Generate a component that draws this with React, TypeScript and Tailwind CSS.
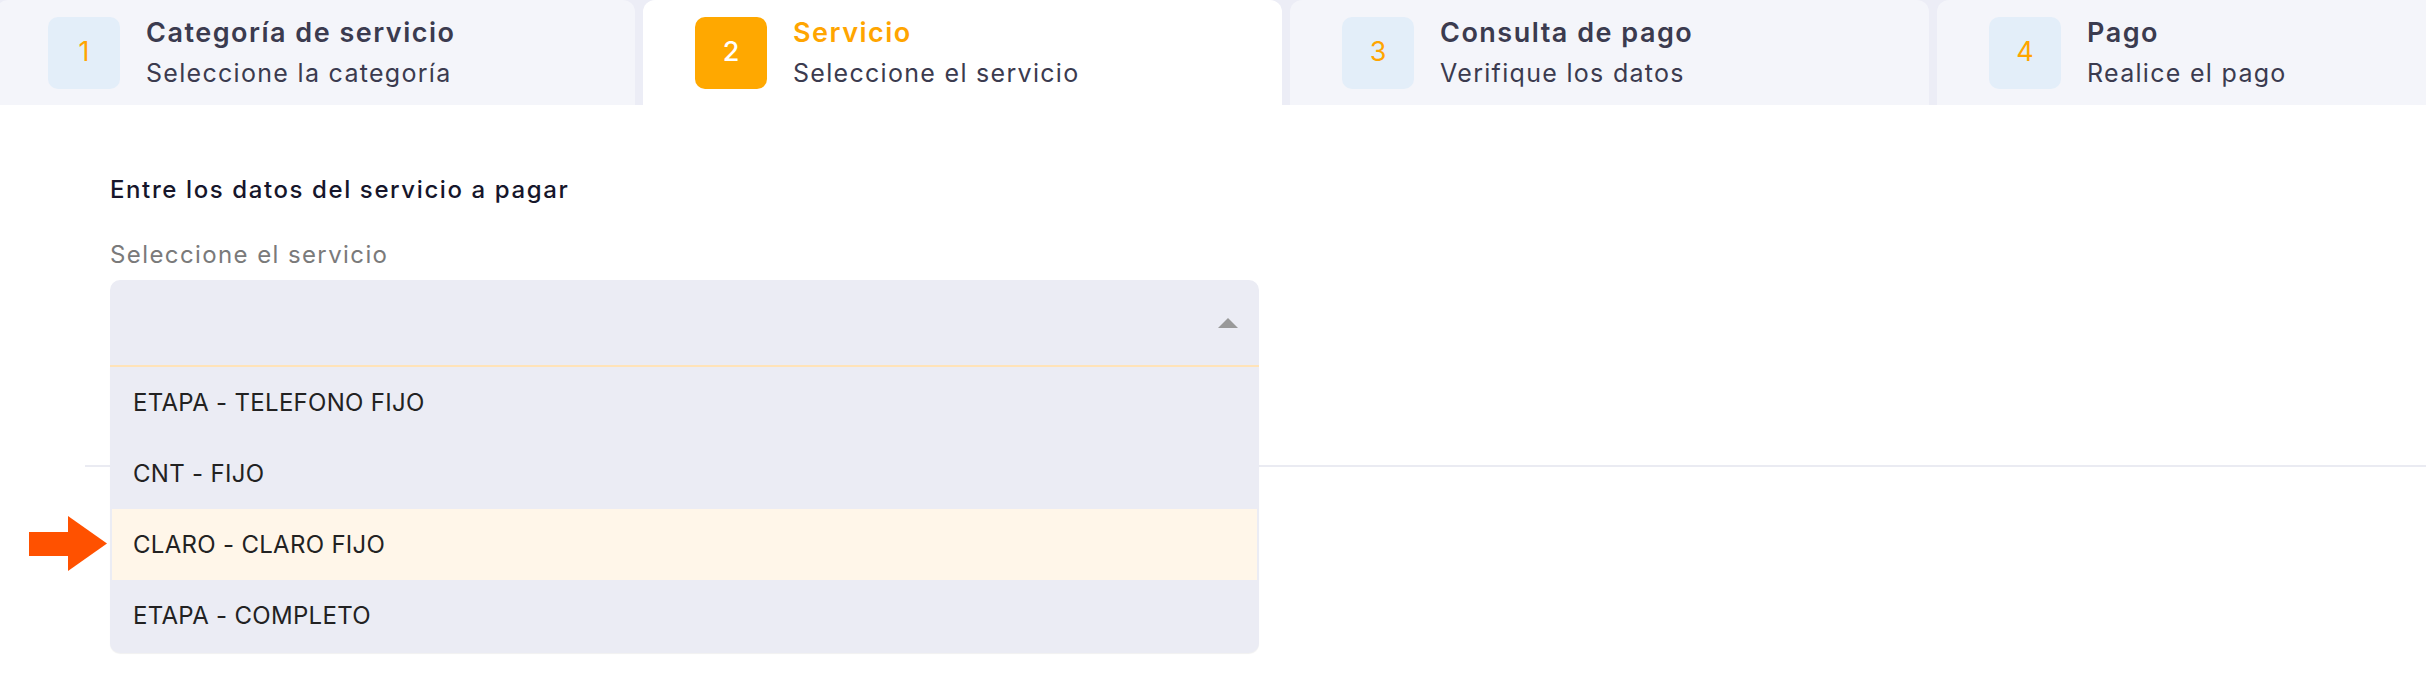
import React from 'react';

interface Step {
  n: number;
  title: string;
  subtitle: string;
  active?: boolean;
}

const steps: Step[] = [
  { n: 1, title: 'Categoría de servicio', subtitle: 'Seleccione la categoría' },
  { n: 2, title: 'Servicio', subtitle: 'Seleccione el servicio', active: true },
  { n: 3, title: 'Consulta de pago', subtitle: 'Verifique los datos' },
  { n: 4, title: 'Pago', subtitle: 'Realice el pago' },
];

const options = ['ETAPA - TELEFONO FIJO', 'CNT - FIJO', 'CLARO - CLARO FIJO', 'ETAPA - COMPLETO'];

const App = () => {
  return (
    <div className="relative w-[2426px] h-[696px] overflow-hidden bg-white font-['Inter',sans-serif]">
      {/* pasos */}
      <div className="flex h-[105px] gap-[8px] bg-[#ecedf6] -ml-[4px]">
        {steps.map((s) => (
          <div
            key={s.n}
            className={
              'flex w-[639px] shrink-0 items-center gap-[26px] rounded-t-[12px] pl-[52px] ' +
              (s.active ? 'bg-white' : 'bg-[#f4f5fa]')
            }
          >
            <div
              className={
                'flex h-[72px] w-[72px] items-center justify-center rounded-[10px] text-[27px] ' +
                (s.active ? 'bg-[#ffa800] text-white font-medium' : 'bg-[#e3eef9] text-[#ffa500]')
              }
            >
              {s.n}
            </div>
            <div className="flex flex-col">
              <span
                className={
                  'text-[27px] font-semibold leading-[40px] tracking-[1.5px] ' +
                  (s.active ? 'text-[#ffa500]' : 'text-[#3b3b4f]')
                }
              >
                {s.title}
              </span>
              <span className="text-[25px] leading-[40px] tracking-[1.3px] text-[#3b3b4f]">{s.subtitle}</span>
            </div>
          </div>
        ))}
      </div>

      {/* formulario */}
      <div className="pt-[67px]">
        <div className="px-[110px]">
          <h2 className="text-[24px] font-medium leading-[36px] tracking-[1.6px] text-[#16162b]">
            Entre los datos del servicio a pagar
          </h2>
          <label className="mt-[29px] block text-[24px] leading-[36px] tracking-[1.4px] text-[#7a7a7a]">
            Seleccione el servicio
          </label>
          <div className="relative mt-[7px] w-[1149px]">
            <div className="flex h-[87px] items-center justify-end rounded-t-[10px] border-b-2 border-[#ffe3b8] bg-[#ebecf4] pr-[21px]">
              <svg width="20" height="10" viewBox="0 0 20 10">
                <polygon points="10,0 20,10 0,10" fill="#999999" />
              </svg>
            </div>
            <ul className="absolute left-0 top-full z-10 w-full rounded-b-[10px] bg-[#ebecf4] px-[2px] pb-[2px] shadow-[0_1px_1px_rgba(0,0,0,0.06)]">
              {options.map((o, i) => (
                <li
                  key={o}
                  className={
                    'flex h-[71px] items-center pl-[21px] text-[24px] tracking-[0.3px] text-[#222] ' +
                    (i === 2 ? 'bg-[#fff6e9]' : '')
                  }
                >
                  {o}
                </li>
              ))}
            </ul>
          </div>
        </div>
        <div className="ml-[85px] mt-[98px] border-t-2 border-[#eaebf2]" />
      </div>

      {/* flecha */}
      <svg className="absolute left-[29px] top-[516px] z-20" width="78" height="55" viewBox="0 0 78 55">
        <rect x="0" y="16" width="40" height="24" fill="#ff5100" />
        <polygon points="39,0 78,27.5 39,55" fill="#ff5100" />
      </svg>
    </div>
  );
};

export default App;
